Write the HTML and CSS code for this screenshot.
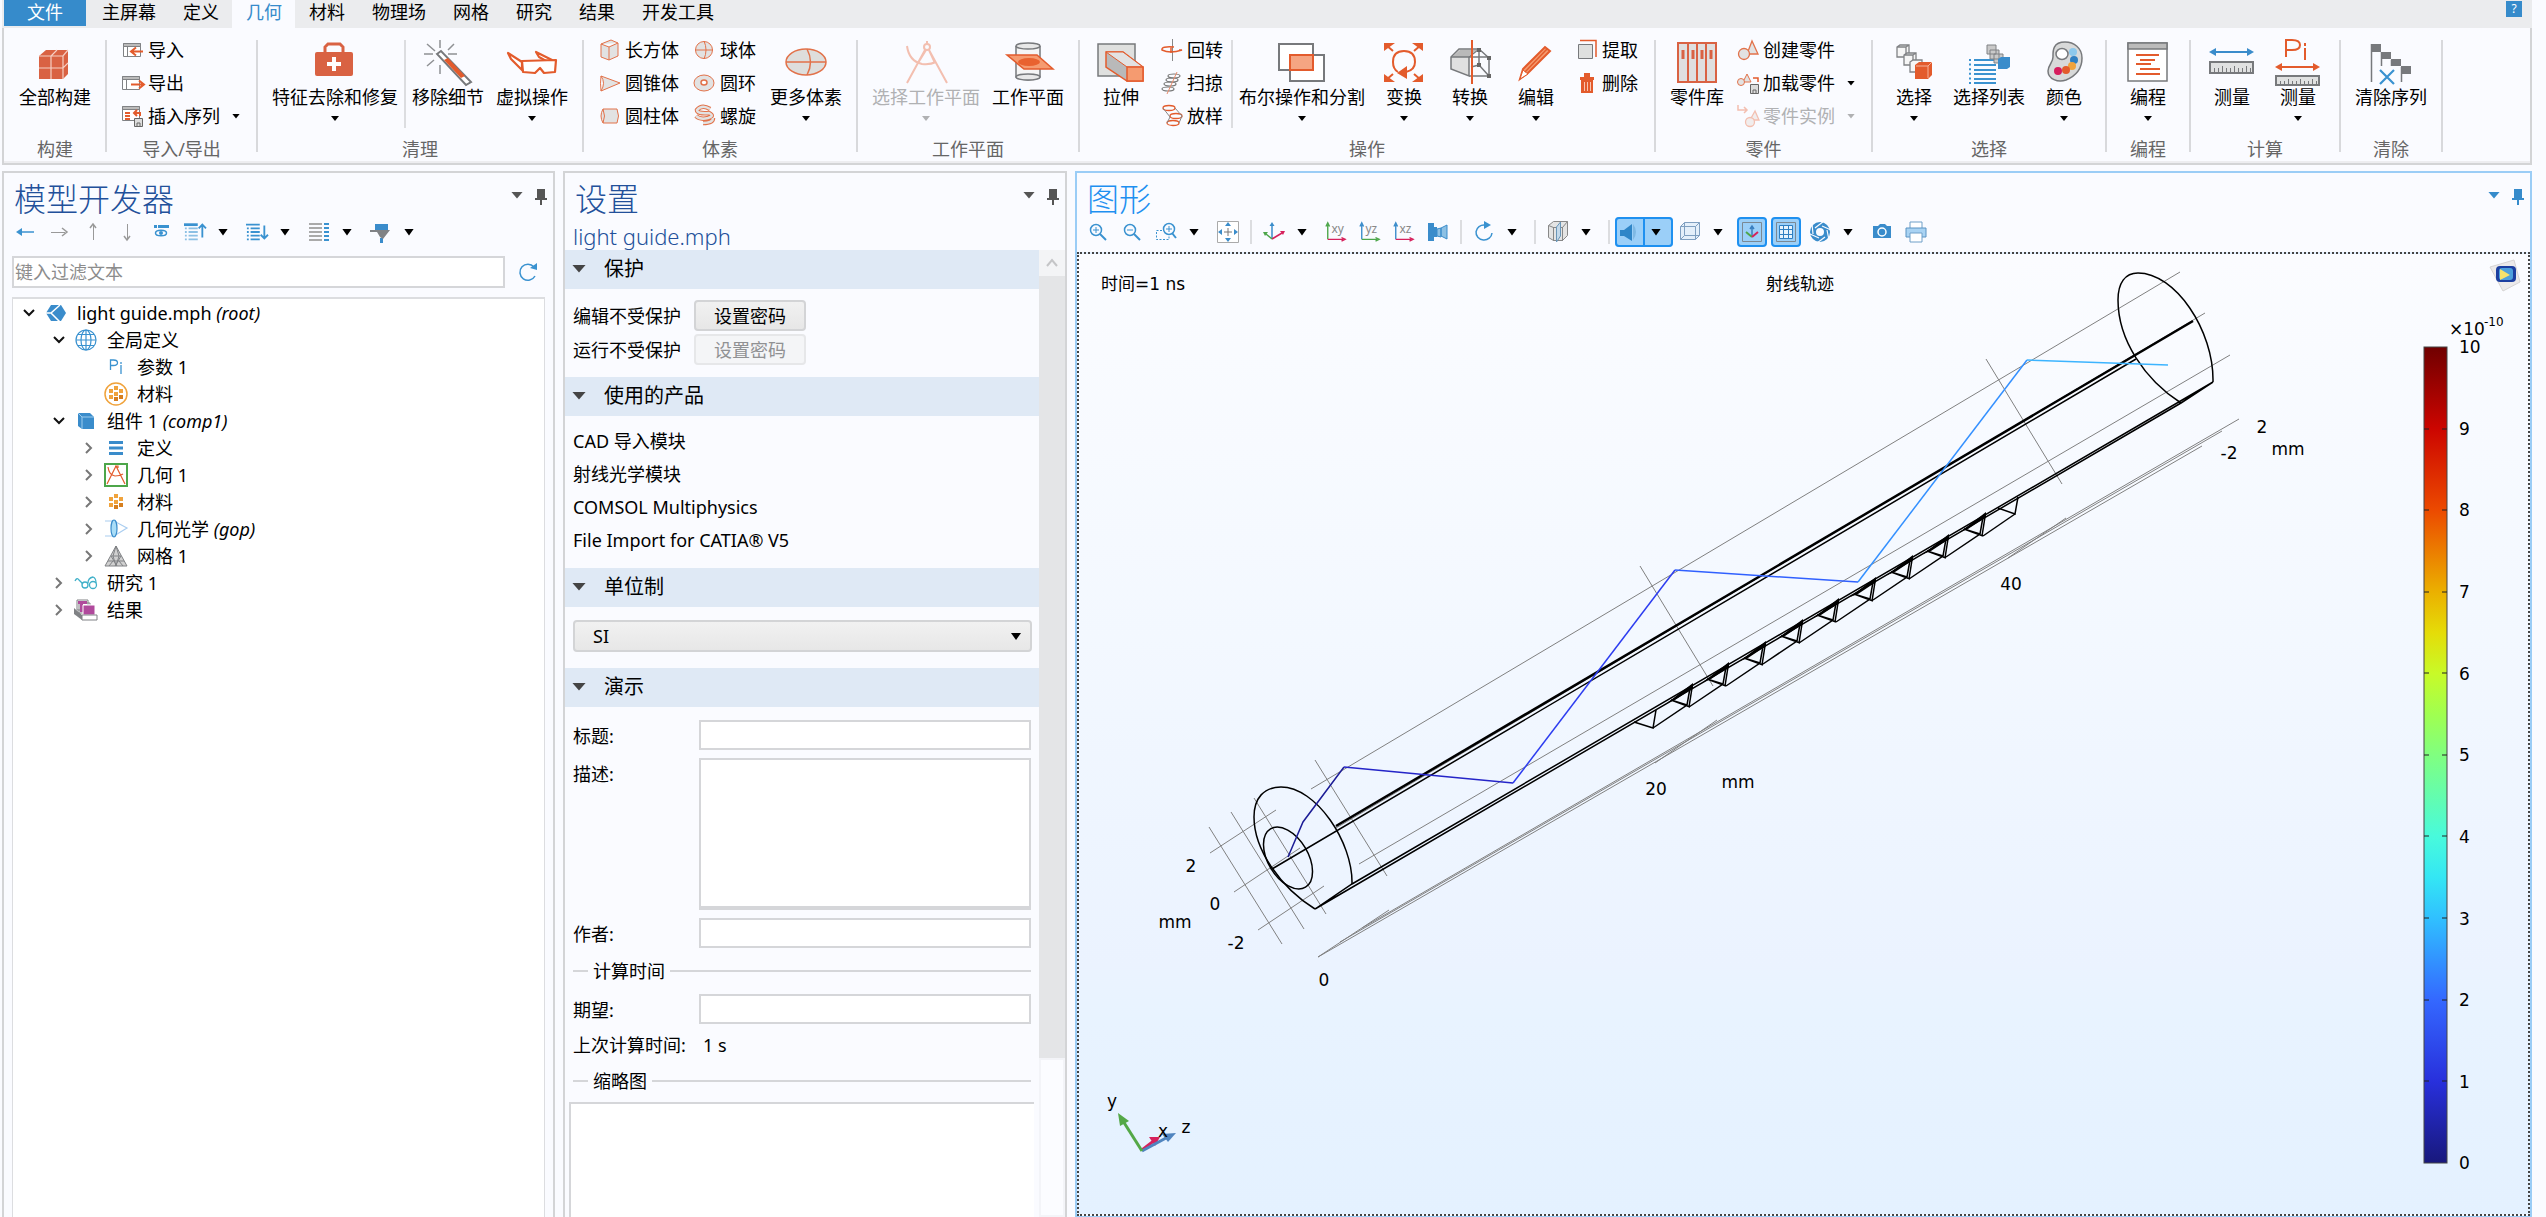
FILE: index.html
```html
<!DOCTYPE html>
<html lang="zh-CN">
<head>
<meta charset="utf-8">
<title>light guide.mph</title>
<link rel="stylesheet" href="styles.css">
</head>
<body>
<header class="top">
  <nav class="tabs">
    <button class="tab tab-file">文件</button>
    <button class="tab">主屏幕</button>
    <button class="tab">定义</button>
    <button class="tab tab-active">几何</button>
    <button class="tab">材料</button>
    <button class="tab">物理场</button>
    <button class="tab">网格</button>
    <button class="tab">研究</button>
    <button class="tab">结果</button>
    <button class="tab">开发工具</button>
    <button class="help">?</button>
  </nav>
  <div class="ribbon">
    <section class="group">
      <div class="tools">
        <button class="big"><svg class="ic-l" viewBox="0 0 48 44"><path fill="#d96243" d="M8 16l7-6h22v24l-5 5H8z"/><path stroke="#f6cfc4" stroke-width="1.2" fill="none" d="M8 16h24l5-6M32 16v23M20 39V16l6-6M8 28h24l5-5"/></svg><span>全部构建</span></button>
      </div>
      <h2>构建</h2>
    </section>
    <section class="group">
      <div class="tools">
        <div class="col">
          <button class="small"><svg class="ic-s" viewBox="0 0 24 22"><path fill="#fff" stroke="#808285" d="M2.500 4.500h17v13h-17z"/><path fill="#bbb" stroke="#808285" d="M2.500 4.500h17v3h-17zM6.500 8v10"/><path fill="none" stroke="#e35b2c" stroke-width="2" d="M22 12.500H10m5-4l-5 4 5 4"/></svg>导入</button>
          <button class="small"><svg class="ic-s" viewBox="0 0 24 22"><path fill="#fff" stroke="#808285" d="M1.500 4.500h17v13h-17z"/><path fill="#bbb" stroke="#808285" d="M1.500 4.500h17v3h-17zM5.500 8v10"/><path fill="none" stroke="#e35b2c" stroke-width="2" d="M10 12.500h13m-5-4l5 4-5 4"/></svg>导出</button>
          <button class="small"><svg class="ic-s" viewBox="0 0 24 22"><path fill="#fff" stroke="#808285" d="M1.500 1.500h17v14h-17z"/><path fill="#bbb" stroke="#808285" d="M1.500 1.500h17v3h-17z"/><path fill="none" stroke="#e35b2c" stroke-width="2" d="M4 8h5M4 11h5M4 14h5M19 11V8h-6m3-3l-3 3 3 3"/><path fill="#ddd" stroke="#666" d="M13.500 13.500h8v8h-8zM16 22v-4h3v4"/></svg>插入序列<i class="caret"></i></button>
        </div>
      </div>
      <h2>导入/导出</h2>
    </section>
    <section class="group">
      <div class="tools">
        <button class="big"><svg class="ic-l" viewBox="0 0 48 44"><rect x="4" y="12" width="38" height="24" rx="2" fill="#d96243"/><path fill="none" stroke="#d96243" stroke-width="3" d="M14 12V7l3-3h12l3 3v5"/><path stroke="#fff" stroke-width="4" d="M23 17v14M16 24h14"/></svg><span>特征去除和修复</span><i class="caret"></i></button>
        <i class="rule"></i>
        <button class="big"><svg class="ic-l" viewBox="0 0 48 44"><path stroke="#8f9194" stroke-width="1.500" d="M16 0v8M3 4l8 7M0 14h9M3 26l7-6M16 25v9M24 10l6-6M24 14h9"/><path fill="#fff" stroke="#77797c" stroke-width="2" d="M13 14l4-3 30 31-5 3z"/><path fill="#e35b2c" d="M20 20l4-2 17 18-4 2z"/></svg><span>移除细节</span></button>
        <button class="big"><svg class="ic-l" viewBox="0 0 48 44"><g fill="#fff" stroke="#e35b2c" stroke-width="2.200" stroke-linejoin="round"><path d="M14 22L0 13l3 6 11 11z"/><path d="M44 20L28 12l3 5 9 5z"/><path d="M14 21l34-1-1 12-11 1-4-5-5 5-12-1z"/></g></svg><span>虚拟操作</span><i class="caret"></i></button>
      </div>
      <h2>清理</h2>
    </section>
    <section class="group">
      <div class="tools">
        <div class="col">
          <button class="small"><svg class="ic-s" viewBox="0 0 24 22"><path fill="#e2e2e2" stroke="#e2724a" d="M3 5l10-4 7 3v13l-9 4-8-3zM3 5l8 3 9-4M11 8v13"/></svg>长方体</button>
          <button class="small"><svg class="ic-s" viewBox="0 0 24 22"><path fill="#e2e2e2" stroke="#e2724a" d="M3 4q5 7 0 15L22 11z"/><path fill="none" stroke="#e2724a" d="M3 4q-1 7 0 15"/></svg>圆锥体</button>
          <button class="small"><svg class="ic-s" viewBox="0 0 24 22"><path fill="#e2e2e2" stroke="#e2724a" d="M5 4h14q3 7 0 14H5q-4-7 0-14"/><path fill="none" stroke="#e2724a" d="M5 4q3 7 0 14"/></svg>圆柱体</button>
        </div>
        <div class="col">
          <button class="small"><svg class="ic-s" viewBox="0 0 24 22"><circle cx="11" cy="11" r="8.500" fill="#e2e2e2" stroke="#e2724a"/><path fill="none" stroke="#e2724a" d="M2 11h18M11 2q4 9 0 18"/></svg>球体</button>
          <button class="small"><svg class="ic-s" viewBox="0 0 24 22"><ellipse cx="11" cy="11" rx="10" ry="8" fill="#e2e2e2" stroke="#e2724a"/><ellipse cx="11" cy="10.500" rx="3" ry="2.500" fill="#fff" stroke="#e2724a" stroke-width="1.500"/></svg>圆环</button>
          <button class="small"><svg class="ic-s" viewBox="0 0 24 22"><path fill="none" stroke="#e2724a" stroke-width="4.500" d="M17 4Q9-1 4 5q0 4 12 3 6 3-1 5-8 2-12-2M20 13q0 5-10 5"/><path fill="none" stroke="#e2e2e2" stroke-width="2.500" d="M17 4Q9-1 4 5q0 4 12 3 6 3-1 5-8 2-12-2M20 13q0 5-10 5"/></svg>螺旋</button>
        </div>
        <button class="big"><svg class="ic-l" viewBox="0 0 48 44"><ellipse cx="24" cy="22" rx="20" ry="13" fill="#dededc" stroke="#e2724a" stroke-width="1.500"/><path fill="none" stroke="#e2724a" stroke-width="1.500" d="M4 22h40M25 9q7 13 0 26"/></svg><span>更多体素</span><i class="caret"></i></button>
      </div>
      <h2>体素</h2>
    </section>
    <section class="group">
      <div class="tools">
        <button class="big" disabled><svg class="ic-l" viewBox="0 0 48 44"><g fill="none" stroke="#f3bfb0" stroke-width="2"><circle cx="25" cy="7" r="3"/><path d="M25 1v3M23 10L5 43M27 10l18 33M5 6q2 15 15 18 8 1 14-2M24 10l-8 13M27 10l6 13"/></g></svg><span>选择工作平面</span><i class="caret"></i></button>
        <button class="big"><svg class="ic-l" viewBox="0 0 48 44"><path fill="#f5f5f5" stroke="#77797c" stroke-width="1.500" d="M12 6v31q12 6 24 0V6"/><ellipse cx="24" cy="6" rx="12" ry="3" fill="#e8e8e8" stroke="#77797c" stroke-width="1.500"/><ellipse cx="24" cy="37" rx="12" ry="3" fill="#e8e8e8" stroke="#77797c" stroke-width="1.500"/><path fill="#f59b70" stroke="#e35b2c" stroke-width="1.500" d="M3 15h30l16 14H20z"/><ellipse cx="25" cy="22" rx="11" ry="4" fill="#e9622f"/></svg><span>工作平面</span></button>
      </div>
      <h2>工作平面</h2>
    </section>
    <section class="group">
      <div class="tools">
        <button class="big"><svg class="ic-l" viewBox="0 0 48 44"><path fill="#dfe0df" stroke="#77797c" stroke-width="1.500" d="M1 4h37v32H1z"/><path fill="#b9b9b9" stroke="#e35b2c" stroke-width="1.500" d="M9 12h17l20 15v14H30L9 27z"/><path fill="#e2e2e2" stroke="#e35b2c" d="M9 12h17l20 15H30z"/><path fill="#f59b70" stroke="#e35b2c" stroke-width="1.500" d="M30 27h16v14H30z"/></svg><span>拉伸</span></button>
        <div class="col">
          <button class="small"><svg class="ic-s" viewBox="0 0 24 22"><path stroke="#888" d="M12.500 0v22"/><path fill="none" stroke="#e35b2c" stroke-width="1.500" d="M14 8Q1 7 2 11q8 4 20 0h-3m-8-3v6"/></svg>回转</button>
          <button class="small"><svg class="ic-s" viewBox="0 0 24 22"><g fill="none" stroke="#777" stroke-width="1.200"><ellipse cx="14" cy="4" rx="6" ry="2"/><ellipse cx="12" cy="8" rx="6" ry="2"/><ellipse cx="10" cy="12" rx="6" ry="2"/><ellipse cx="8" cy="17" rx="6" ry="2"/></g><path fill="none" stroke="#e98a6a" d="M17 0L7 22"/></svg>扫掠</button>
          <button class="small"><svg class="ic-s" viewBox="0 0 24 22"><g fill="none" stroke="#e35b2c" stroke-width="1.300"><ellipse cx="9" cy="3" rx="6" ry="2.500"/><ellipse cx="16" cy="11" rx="6" ry="2.500"/><ellipse cx="13" cy="18" rx="6" ry="2.500"/></g><path fill="none" stroke="#888" d="M3 3l7 9-3 6M15 3l7 8-3 7"/></svg>放样</button>
        </div>
        <i class="rule"></i>
        <button class="big"><svg class="ic-l" viewBox="0 0 48 44"><g fill="#fff" stroke="#77797c" stroke-width="2"><path d="M1 4h34v26H1zM12 15h34v26H12z"/></g><path fill="none" stroke="#77797c" stroke-width="2" d="M12 30V15h23"/><path fill="#f5a582" stroke="#e35b2c" stroke-width="2" d="M12 15h23v15H12z"/></svg><span>布尔操作和分割</span><i class="caret"></i></button>
        <button class="big"><svg class="ic-l" viewBox="0 0 48 44"><path fill="#e35b2c" d="M4 3h11l-11 8zM43 3H32l11 8zM4 42h11L4 34zM43 42H32l11-8zM17 33l10-7v13z"/><path fill="none" stroke="#e35b2c" stroke-width="2" d="M6 5l7 6M41 5l-7 6M6 40l7-6M41 40l-7-6M26 32q9-2 9-10 0-11-11-11T13 22q0 7 5 10"/></svg><span>变换</span><i class="caret"></i></button>
        <button class="big"><svg class="ic-l" viewBox="0 0 48 44"><path fill="#e0e0e0" stroke="#77797c" stroke-width="1.500" d="M5 17l8-8h20l-10 8v19L5 29z"/><path fill="#b9b9b9" d="M6 17l8-7h17l-9 7z"/><path fill="none" stroke="#77797c" stroke-width="1.500" d="M5 17h38M33 9v16l10 11V18L33 9M23 36h20M33 25l-8 2"/><path fill="#666" d="M31 8h4v4h-4zM41 16h4v4h-4zM41 34h4v4h-4zM31 23h4v4h-4z"/><path stroke="#e35b2c" stroke-width="2" d="M26 0v44"/></svg><span>转换</span><i class="caret"></i></button>
        <button class="big"><svg class="ic-l" viewBox="0 0 48 44"><path fill="#f59b70" stroke="#e35b2c" stroke-width="2" d="M8 39l3-10L33 7l5 4-22 22z"/><path fill="#fff" stroke="#e35b2c" d="M8 39l3-9 5 4z"/><path stroke="#e35b2c" stroke-width="1.500" d="M13 32l22-23"/></svg><span>编辑</span><i class="caret"></i></button>
        <div class="col">
          <button class="small"><svg class="ic-s" viewBox="0 0 24 22"><path fill="#dfe0df" stroke="#77797c" d="M3.500 5.500h14v14h-14z"/><path fill="none" stroke="#e35b2c" stroke-width="1.500" d="M5 1.500h16V18"/></svg>提取</button>
          <button class="small"><svg class="ic-s" viewBox="0 0 24 22"><path fill="#e35b2c" d="M5 5h14v3H5zM9 1h6v4H9zM6 8h12v13H6z"/><path stroke="#f8c4b0" d="M9.500 10v9M12.500 10v9M15.500 10v9"/></svg>删除</button>
        </div>
      </div>
      <h2>操作</h2>
    </section>
    <section class="group">
      <div class="tools">
        <button class="big"><svg class="ic-l" viewBox="0 0 48 44"><path fill="#dfdfdf" stroke="#d96243" stroke-width="2" d="M5 3h38v39H5zM15 3v39M24 3v39M33 3v39"/><path stroke="#d96243" stroke-width="3" d="M10 10v9M20 10v9M29 10v9M38 10v9"/></svg><span>零件库</span></button>
        <div class="col">
          <button class="small"><svg class="ic-s" viewBox="0 0 24 22"><g fill="#e2e2e2" stroke="#e2724a" stroke-width="1.300"><path d="M16 2l-5 13h11z"/><circle cx="8" cy="15" r="5.500"/></g></svg>创建零件</button>
          <button class="small"><svg class="ic-s" viewBox="0 0 24 22"><g fill="#e2e2e2" stroke="#e2724a"><path d="M11 2l-4 8h8z"/><circle cx="5" cy="10" r="3.500"/></g><path fill="none" stroke="#e35b2c" stroke-width="1.500" d="M22 10V6h-5"/><path fill="#ddd" stroke="#666" d="M14.500 12.500h8v9h-8zM17 22v-4h3v4"/></svg>加载零件<i class="caret"></i></button>
          <button class="small" disabled><svg class="ic-s" viewBox="0 0 24 22"><g fill="#f1eded" stroke="#f3bfb0" stroke-width="1.300"><path d="M19 6l-5 9h9z"/><circle cx="14" cy="17" r="4.500"/></g><path fill="none" stroke="#f3bfb0" stroke-width="1.500" d="M2 0v5h9m-3-3l3 3-3 3"/></svg>零件实例<i class="caret"></i></button>
        </div>
      </div>
      <h2>零件</h2>
    </section>
    <section class="group">
      <div class="tools">
        <button class="big"><svg class="ic-l" viewBox="0 0 48 44"><g fill="#f6f6f6" stroke="#808285" stroke-width="1.300"><path d="M7 7l3-2h9v9l-3 3H7zM7 7h9v10M16 7l3-2"/><path d="M14 15l3-2h9v9l-3 3h-9zM14 15h9v10M23 15l3-2"/><path d="M20 22l3-2h9v9l-3 3h-9z"/></g><path fill="#e35b2c" d="M25 25l4-3h13v13l-4 4H25z"/><path fill="none" stroke="#f5b39a" d="M26 26h12v12M38 26l4-4"/></svg><span>选择</span><i class="caret"></i></button>
        <button class="big"><svg class="ic-l" viewBox="0 0 48 44"><path fill="none" stroke="#3a92d0" stroke-width="2" d="M9 20h22M9 25h22M9 30h22M9 34h22M9 39h22M9 43h22" /><path stroke="#3a92d0" stroke-width="2" stroke-dasharray="2 2.600" d="M5 19v25"/><g fill="#c9c9c9" stroke="#808285"><path d="M22 5h9v9h-9zM25 10h9v9h-9zM29 14h9v9h-9z"/></g><path fill="#3a8ccb" d="M33 19l3-2h9v10l-3 2h-9z"/></svg><span>选择列表</span></button>
        <button class="big"><svg class="ic-l" viewBox="0 0 48 44"><path fill="#d8d9d9" stroke="#77797c" stroke-width="1.500" d="M25 2C12 2 13 12 13 17c0 6-5 8-5 14 0 8 10 12 18 9 12-5 16-14 16-22C42 8 34 2 25 2z"/><ellipse cx="22" cy="14" rx="6" ry="5.500" fill="#fff" stroke="#77797c" stroke-width="1.500"/><circle cx="33" cy="12" r="4" fill="#8cc8ec"/><circle cx="34" cy="20" r="4" fill="#2f7fc1"/><circle cx="32" cy="26" r="4" fill="#f0a33c"/><circle cx="26" cy="30" r="4" fill="#e35b2c"/><circle cx="18" cy="31" r="4" fill="#d61c5c"/></svg><span>颜色</span><i class="caret"></i></button>
      </div>
      <h2>选择</h2>
    </section>
    <section class="group">
      <div class="tools">
        <button class="big"><svg class="ic-l" viewBox="0 0 48 44"><path fill="#fff" stroke="#77797c" stroke-width="1.500" d="M4 3h39v38H4z"/><path fill="#bbb" stroke="#77797c" stroke-width="1.500" d="M4 3h39v6H4z"/><path stroke="#e35b2c" stroke-width="2" d="M12 15h23M16 20h15M12 24h15M16 29h20M12 34h24"/></svg><span>编程</span><i class="caret"></i></button>
      </div>
      <h2>编程</h2>
    </section>
    <section class="group">
      <div class="tools">
        <button class="big"><svg class="ic-l" viewBox="0 0 48 44"><path fill="#3a8ccb" d="M1 12l7-4v8zM46 12l-7-4v8z"/><path stroke="#3a8ccb" stroke-width="2" d="M5 12h37"/><path fill="#e0e1e1" stroke="#77797c" stroke-width="2" d="M2 22h43v11H2z"/><path stroke="#77797c" d="M6.500 32v-4M10.500 32v-4M14.500 32v-6M18.500 32v-4M22.500 32v-4M26.500 32v-6M30.500 32v-4M34.500 32v-4M38.500 32v-6M42.500 32v-4"/></svg><span>测量</span></button>
        <button class="big"><svg class="ic-l" viewBox="0 0 48 44"><path fill="none" stroke="#e35b2c" stroke-width="2" d="M12 17V0h6q8 0 8 5t-8 5h-6M31 8v12M31 3v3"/><path fill="#e35b2c" d="M1 27l7-4v8zM46 27l-7-4v8z"/><path stroke="#e35b2c" stroke-width="2" d="M5 27h37"/><path fill="#e0e1e1" stroke="#77797c" stroke-width="2" d="M2 36h43v9H2z"/><path stroke="#77797c" d="M6.500 44v-3M10.500 44v-3M14.500 44v-5M18.500 44v-3M22.500 44v-3M26.500 44v-5M30.500 44v-3M34.500 44v-3M38.500 44v-5M42.500 44v-3"/></svg><span>测量</span><i class="caret"></i></button>
      </div>
      <h2>计算</h2>
    </section>
    <section class="group">
      <div class="tools">
        <button class="big"><svg class="ic-l" viewBox="0 0 48 44"><path fill="#77797c" d="M4 4h10v8H4zM14 12h10v7H14zM24 19h10v7H24zM34 26h10v8H34z"/><path stroke="#77797c" stroke-width="1.500" d="M4.500 4v38M14.500 12v14M24.500 20v6M34.500 27v15"/><path stroke="#3a92d0" stroke-width="2.200" d="M13 30l14 14M27 30L13 44"/></svg><span>清除序列</span></button>
      </div>
      <h2>清除</h2>
    </section>
  </div>
</header>

<main class="work">
  <section class="panel">
    <div class="panel-head"><h1>模型开发器</h1><i class="caret caret-tool"></i><svg class="pin" viewBox="0 0 12 16"><path d="M2 0h8v9h2v2H7v5H5v-5H0V9h2z"/></svg></div>
    <div class="toolbar">
      <button class="tool" aria-label="后退"><svg viewBox="0 0 22 22"><path stroke="#3a92d0" stroke-width="1.500" d="M5 11h15"/><path fill="#3a92d0" d="M2 11l6-4v8z"/></svg></button>
      <button class="tool" aria-label="前进"><svg viewBox="0 0 22 22"><path stroke="#999" d="M3 11.500h14"/><path fill="none" stroke="#999" stroke-width="1.500" d="M14 7l5 4-5 4"/></svg></button>
      <button class="tool" aria-label="上移"><svg viewBox="0 0 22 22"><path stroke="#999" d="M11.500 4v15"/><path fill="none" stroke="#999" stroke-width="1.500" d="M8 7l3-4 3 4"/></svg></button>
      <button class="tool" aria-label="下移"><svg viewBox="0 0 22 22"><path stroke="#999" d="M11.500 3v15"/><path fill="none" stroke="#999" stroke-width="1.500" d="M8 15l3 4 3-4"/></svg></button>
      <button class="tool" aria-label="显示"><svg viewBox="0 0 22 22"><path stroke="#3a92d0" stroke-width="3" d="M4 5.500h3M8 5.500h11"/><ellipse cx="11" cy="12" rx="5.500" ry="2.800" fill="none" stroke="#3a92d0" stroke-width="1.500"/><circle cx="11" cy="12" r="2" fill="#3a92d0"/></svg></button>
      <button class="tool" aria-label="展开"><svg viewBox="0 0 24 22"><path stroke="#3a92d0" stroke-width="3" d="M0 3h15"/><path stroke="#8cc0e4" stroke-width="2" d="M1 7h2M5 7h10M1 11h2M5 11h10M1 15h2M5 15h10M1 19h2M5 19h10"/><path fill="none" stroke="#3a92d0" stroke-width="2" d="M20 17V3m-4 4l4-4 4 4"/></svg></button><button class="tool-drop" aria-label="展开选项"><i class="caret caret-tool"></i></button>
      <button class="tool" aria-label="折叠"><svg viewBox="0 0 24 22"><path stroke="#3a92d0" stroke-width="2" d="M0 3h15M1 7h2M5 7h10M1 11h2M5 11h10M1 15h2M5 15h10M1 19h2M5 19h10"/><path fill="none" stroke="#3a92d0" stroke-width="2" d="M20 4v14m-4-4l4 4 4-4"/></svg></button><button class="tool-drop" aria-label="折叠选项"><i class="caret caret-tool"></i></button>
      <button class="tool" aria-label="列"><svg viewBox="0 0 22 22"><path stroke="#aaa" stroke-width="2" d="M1 3h13M1 7h13M1 11h13M1 15h13M1 19h13"/><path stroke="#3a92d0" stroke-width="2" d="M16 3h5M16 7h5M16 11h5M16 15h5M16 19h5"/></svg></button><button class="tool-drop" aria-label="列选项"><i class="caret caret-tool"></i></button>
      <button class="tool" aria-label="筛选"><svg viewBox="0 0 22 22"><path fill="#3a8ccb" d="M5 3h13v6H5zM10 17h3v5h-3z"/><path fill="#808285" d="M0 9h20l-7 9-3-2-3-5H0z"/></svg></button><button class="tool-drop" aria-label="筛选选项"><i class="caret caret-tool"></i></button>
    </div>
    <div class="filter">
      <input class="field filter-box" type="text" placeholder="键入过滤文本" aria-label="键入过滤文本">
      <button class="tool" aria-label="刷新"><svg viewBox="0 0 22 22"><path fill="none" stroke="#3a92d0" stroke-width="1.500" d="M18 15a8 8 0 1 1-1-9"/><path fill="#3a92d0" d="M13 7l7-5v7z"/></svg></button>
    </div>
    <ul class="tree">
      <li class="node l0"><svg class="chev open" viewBox="0 0 12 12"><path d="M1 3l5 5 5-5"/></svg><svg class="ic-t" viewBox="0 0 24 24"><path fill="#3a8ccb" d="M2 12l5-8h10l5 8-5 8H7z"/><path stroke="#fff" stroke-width="1.500" fill="none" d="M2 12h5l9-8M7 12l9 9"/></svg><span>light guide.mph <em>(root)</em></span></li>
      <li class="node l1"><svg class="chev open" viewBox="0 0 12 12"><path d="M1 3l5 5 5-5"/></svg><svg class="ic-t" viewBox="0 0 24 24"><g fill="none" stroke="#3a92d0" stroke-width="1.200"><circle cx="12" cy="12" r="10"/><ellipse cx="12" cy="12" rx="5" ry="10"/><path d="M2 12h20M12 2v20M4 6.500h16M4 17.500h16"/></g></svg><span>全局定义</span></li>
      <li class="node l2"><i class="chev"></i><svg class="ic-t" viewBox="0 0 24 24"><path fill="none" stroke="#3a92d0" stroke-width="1.300" d="M6.500 15V5h3q4 0 4 2.700T9.500 10.500h-3M17 10v9M17 7v2"/></svg><span>参数 1</span></li>
      <li class="node l2"><i class="chev"></i><svg class="ic-t" viewBox="0 0 24 24"><circle cx="12" cy="12" r="11" fill="none" stroke="#f0a33c" stroke-width="1.500"/><path fill="#f0a33c" d="M10 4h4v4h-4zM5 7h4v4H5zM15 7h4v4h-4zM10 10h4v4h-4zM5 13h4v4H5z"/><path fill="#d67f1f" d="M15 13h4v4h-4zM10 15h4v4h-4z"/></svg><span>材料</span></li>
      <li class="node l1"><svg class="chev open" viewBox="0 0 12 12"><path d="M1 3l5 5 5-5"/></svg><svg class="ic-t" viewBox="0 0 24 24"><path fill="#3a8ccb" d="M4 4h12l4 4v12H8l-4-3z"/><path fill="none" stroke="#9cccee" d="M4 4l4 4h12M8 8v12"/></svg><span>组件 1 <em>(comp1)</em></span></li>
      <li class="node l2"><svg class="chev" viewBox="0 0 12 12"><path d="M3 1l5 5-5 5"/></svg><svg class="ic-t" viewBox="0 0 24 24"><path stroke="#3a8ccb" stroke-width="3" d="M5 6.500h14M5 12h14M5 17.500h14"/></svg><span>定义</span></li>
      <li class="node l2"><svg class="chev" viewBox="0 0 12 12"><path d="M3 1l5 5-5 5"/></svg><svg class="ic-t" viewBox="0 0 24 24"><path fill="#fff" stroke="#4da64a" stroke-width="2" d="M1 1h22v22H1z"/><path fill="none" stroke="#e35b2c" stroke-width="1.200" d="M12 3L3 21M12 3l9 18M4 4q1 8 7 9 5 0 8-2M11 3h3v2"/></svg><span>几何 1</span></li>
      <li class="node l2"><svg class="chev" viewBox="0 0 12 12"><path d="M3 1l5 5-5 5"/></svg><svg class="ic-t" viewBox="0 0 24 24"><path fill="#f0a33c" d="M10 4h4v4h-4zM5 7h4v4H5zM15 7h4v4h-4zM10 10h4v4h-4zM5 13h4v4H5z"/><path fill="#d67f1f" d="M15 13h4v4h-4zM10 15h4v4h-4z"/></svg><span>材料</span></li>
      <li class="node l2"><svg class="chev" viewBox="0 0 12 12"><path d="M3 1l5 5-5 5"/></svg><svg class="ic-t" viewBox="0 0 24 24"><path fill="none" stroke="#a9cdf0" stroke-width="1.200" d="M1 4h9l13 7-13 8H1"/><ellipse cx="10" cy="11.500" rx="3" ry="8.500" fill="#a9ddf7" stroke="#3a8ccb" stroke-width="1.200"/></svg><span>几何光学 <em>(gop)</em></span></li>
      <li class="node l2"><svg class="chev" viewBox="0 0 12 12"><path d="M3 1l5 5-5 5"/></svg><svg class="ic-t" viewBox="0 0 24 24"><path fill="#d0d0d0" stroke="#808285" d="M12 2l11 20H1z"/><path fill="none" stroke="#808285" d="M7 12h10M4 17h16M12 2L9 12l3 10 3-10zM7 12l6 10M17 12l-6 10M9 17l-4 5M15 17l4 5"/></svg><span>网格 1</span></li>
      <li class="node l1"><svg class="chev" viewBox="0 0 12 12"><path d="M3 1l5 5-5 5"/></svg><svg class="ic-t" viewBox="0 0 24 24"><g fill="none" stroke="#3fb0c9" stroke-width="1.300"><circle cx="11" cy="14" r="3"/><circle cx="19" cy="14" r="3.500"/><path d="M1 10q2-4 4-1l4 4M14 12q0-5 5-6 3 1 3 6"/></g></svg><span>研究 1</span></li>
      <li class="node l1"><svg class="chev" viewBox="0 0 12 12"><path d="M3 1l5 5-5 5"/></svg><svg class="ic-t" viewBox="0 0 24 24"><path fill="#fff" stroke="#808285" d="M3 2h11v10H3zM5 5h11v10H5z"/><path fill="#b04a9c" d="M4 3h9v3H4zM6 6h3v8H6z"/><path fill="#b04a9c" stroke="#fff" d="M9 7h12v10H9z"/><path fill="#808285" d="M0 10l8 7v5l-8-6z"/><path fill="#fff" stroke="#808285" d="M8 17h15v5H8z"/></svg><span>结果</span></li>
    </ul>
  </section>

  <section class="panel">
    <div class="panel-head"><h1>设置</h1><i class="caret caret-tool"></i><svg class="pin" viewBox="0 0 12 16"><path d="M2 0h8v9h2v2H7v5H5v-5H0V9h2z"/></svg></div>
    <div class="subtitle">light guide.mph</div>
    <div class="scroll">
      <form class="settings">
        <h3><i class="caret caret-sec"></i>保护</h3>
        <div class="protect">
          <label for="pw1">编辑不受保护</label><button type="button" id="pw1" class="push">设置密码</button>
          <label for="pw2">运行不受保护</label><button type="button" id="pw2" class="push" disabled>设置密码</button>
        </div>
        <h3><i class="caret caret-sec"></i>使用的产品</h3>
        <ul class="products"><li>CAD 导入模块</li><li>射线光学模块</li><li>COMSOL Multiphysics</li><li>File Import for CATIA® V5</li></ul>
        <h3><i class="caret caret-sec"></i>单位制</h3>
        <div class="units"><select class="unit" aria-label="单位制"><option>SI</option></select><i class="caret caret-tool unit-caret"></i></div>
        <h3><i class="caret caret-sec"></i>演示</h3>
        <div class="present">
          <div class="row"><label for="f1">标题:</label><input id="f1" class="field" type="text"></div>
          <div class="row"><label for="f2">描述:</label><textarea id="f2" class="field area"></textarea></div>
          <div class="row"><label for="f3">作者:</label><input id="f3" class="field" type="text"></div>
          <div class="divider">计算时间</div>
          <div class="row"><label for="f4">期望:</label><input id="f4" class="field" type="text"></div>
          <div class="row row-text"><span>上次计算时间:</span><span class="value">1 s</span></div>
          <div class="divider">缩略图</div>
        </div>
        <div class="thumb"></div>
      </form>
      <div class="bar"><div class="bar-up"><svg viewBox="0 0 12 12"><path d="M1 9l5-6 5 6"/></svg></div><div class="bar-thumb"></div><div class="bar-rest"></div></div>
    </div>
  </section>

  <section class="panel panel-active">
    <div class="panel-head"><h1>图形</h1><i class="caret caret-tool"></i><svg class="pin" viewBox="0 0 12 16"><path d="M2 0h8v9h2v2H7v5H5v-5H0V9h2z"/></svg></div>
    <div class="toolbar">
      <button class="tool" aria-label="放大"><svg viewBox="0 0 22 22"><circle cx="9" cy="9" r="5.500" fill="none" stroke="#3a92d0" stroke-width="1.500"/><path stroke="#3a92d0" stroke-width="2" d="M13 13l6 6"/><path stroke="#3a92d0" d="M6 9h6M9 6v6"/></svg></button>
      <button class="tool" aria-label="缩小"><svg viewBox="0 0 22 22"><circle cx="9" cy="9" r="5.500" fill="none" stroke="#3a92d0" stroke-width="1.500"/><path stroke="#3a92d0" stroke-width="2" d="M13 13l6 6"/><path stroke="#3a92d0" d="M6 9h6"/></svg></button>
      <button class="tool" aria-label="框选缩放"><svg viewBox="0 0 22 22"><circle cx="14" cy="8" r="5.500" fill="none" stroke="#3a92d0" stroke-width="1.500"/><path stroke="#3a92d0" stroke-width="2" d="M17 12l4 5"/><path stroke="#3a92d0" d="M11 8h6M14 5v6"/><path fill="none" stroke="#3a92d0" stroke-dasharray="2 1.500" d="M7 9.500H1.500v9H14V15"/></svg></button><button class="tool-drop" aria-label="缩放选项"><i class="caret caret-tool"></i></button>
      <button class="tool" aria-label="缩放到窗口"><svg viewBox="0 0 22 22"><path fill="#fff" stroke="#aaa" d="M.5.5h21v21H.5z"/><path stroke="#777" d="M7 11h8M11 7v8"/><path fill="#3a8ccb" d="M11 1l3 4H8zM11 21l3-4H8zM1 11l4-3v6zM21 11l-4-3v6z"/></svg></button>
      <i class="tool-sep"></i>
      <button class="tool" aria-label="视图"><svg viewBox="0 0 22 22"><path stroke="#3a8ccb" stroke-width="1.500" d="M9 18V4"/><path fill="#3a8ccb" d="M6.500 5L9 1l2.500 4z"/><path stroke="#d6215c" stroke-width="1.500" d="M9 18l10-6"/><path fill="#d6215c" d="M17 10h5l-2 4z"/><path stroke="#4da64a" stroke-width="1.500" d="M9 18l-6-5"/><path fill="#4da64a" d="M0 11h5l-3 4z"/></svg></button><button class="tool-drop" aria-label="视图选项"><i class="caret caret-tool"></i></button>
      <button class="tool" aria-label="xy 视图"><svg class="axes" viewBox="0 0 24 22"><path stroke="#4da64a" stroke-width="1.500" d="M3 19V3M1 5l2-4 2 4"/><path stroke="#d6215c" stroke-width="1.500" d="M3 19h17M18 17l4 2-4 2"/><text x="7" y="12">xy</text></svg></button>
      <button class="tool" aria-label="yz 视图"><svg class="axes" viewBox="0 0 24 22"><path stroke="#3a8ccb" stroke-width="1.500" d="M3 19V3M1 5l2-4 2 4"/><path stroke="#4da64a" stroke-width="1.500" d="M3 19h17M18 17l4 2-4 2"/><text x="7" y="12">yz</text></svg></button>
      <button class="tool" aria-label="xz 视图"><svg class="axes" viewBox="0 0 24 22"><path stroke="#3a8ccb" stroke-width="1.500" d="M3 19V3M1 5l2-4 2 4"/><path stroke="#d6215c" stroke-width="1.500" d="M3 19h17M18 17l4 2-4 2"/><text x="7" y="12">xz</text></svg></button>
      <button class="tool" aria-label="相机"><svg viewBox="0 0 22 22"><path fill="#3a8ccb" d="M1 2h6v4h3v10H7v4H1z"/><path fill="#8cc0e4" stroke="#3a8ccb" d="M10 8l4-1v9l-4-1zM14 7l6-3v14l-6-3z"/></svg></button>
      <i class="tool-sep"></i>
      <button class="tool" aria-label="旋转"><svg viewBox="0 0 22 22"><path fill="none" stroke="#3a92d0" stroke-width="1.500" d="M19 12a8 7.500 0 1 1-7-8"/><path fill="#3a92d0" d="M11 0l7 4-7 4z"/></svg></button><button class="tool-drop" aria-label="旋转选项"><i class="caret caret-tool"></i></button>
      <i class="tool-sep"></i>
      <button class="tool" aria-label="裁剪"><svg viewBox="0 0 22 22"><path fill="#e4e4e4" stroke="#888" d="M1.500 4.500l5-4h14v14l-5 5h-9l-5-3z"/><path fill="none" stroke="#888" d="M1.500 4.500l5 2h9l5-6M6.500 6v14M15.500 6v14"/><path fill="#c4d9ea" stroke="#6a96b8" d="M9.500 6l4-5v14l-4 6z"/></svg></button><button class="tool-drop" aria-label="裁剪选项"><i class="caret caret-tool"></i></button>
      <i class="tool-sep"></i>
      <span class="split"><button class="tool" aria-label="场景光"><svg viewBox="0 0 22 22"><path fill="#2f86c8" d="M2 9h4l8-6v17l-8-5H2z"/><path fill="#7fb9e4" d="M15 3q6 8 0 16z"/></svg></button><button class="tool-drop" aria-label="场景光选项"><i class="caret caret-tool"></i></button></span>
      <button class="tool" aria-label="透明度"><svg viewBox="0 0 22 22"><path fill="#e4effa" stroke="#7f9fc0" d="M1.500 5.500l4-4h15v13l-4 4h-15z"/><path fill="none" stroke="#7f9fc0" d="M1.500 5.500h15v13M16.500 5.500l4-4M5.500 1.500v13h15M5.500 14.500l-4 4"/></svg></button><button class="tool-drop" aria-label="透明度选项"><i class="caret caret-tool"></i></button>
      <button class="tool on" aria-label="显示坐标轴"><svg viewBox="0 0 22 22"><path fill="none" stroke="#7a8894" d="M1.500 1.500h19v19h-19z"/><path fill="none" stroke="#3a7fc0" stroke-width="1.500" d="M11 15V6M9 8l2-3 2 3"/><path stroke="#4da64a" stroke-width="2" d="M11 16l-6-5"/><path stroke="#d6215c" stroke-width="2" d="M11 16l6-5"/></svg></button>
      <button class="tool on" aria-label="显示栅格"><svg viewBox="0 0 22 22"><path fill="none" stroke="#7a8894" d="M1.500 1.500h19v19h-19z"/><path fill="#e6f3fd" d="M4.500 4.500h13v13h-13z"/><path fill="none" stroke="#2f7fc1" d="M4.500 4.500h13v13h-13zM8.500 5v12M13.500 5v12M5 8.500h12M5 13.500h12"/></svg></button>
      <button class="tool" aria-label="快照"><svg viewBox="0 0 22 22"><circle cx="11" cy="11" r="7" fill="none" stroke="#3a8ccb" stroke-width="6"/><path stroke="#fafbff" stroke-width="1.200" d="M15 0L6 7M22 9l-9-4M20 19l-2-10M8 22l8-6M1 13l9 4M3 3l1 10"/></svg></button><button class="tool-drop" aria-label="快照选项"><i class="caret caret-tool"></i></button>
      <button class="tool" aria-label="图像快照"><svg viewBox="0 0 22 22"><path fill="#3a8ccb" d="M2 5h5l2-2h5l2 2h4v12H2z"/><circle cx="11" cy="11" r="4" fill="none" stroke="#fff" stroke-width="1.500"/></svg></button>
      <button class="tool" aria-label="打印"><svg viewBox="0 0 22 22"><path fill="#fff" stroke="#6f9fc8" d="M5 1h12v7H5z"/><path fill="#a9d3f3" stroke="#5b93c2" d="M1 7h20v9H1z"/><path fill="#fff" stroke="#6f9fc8" d="M5 12h12v9H5z"/></svg></button>
    </div>
    <div class="canvas">
      <svg class="plot" viewBox="1079 254 1449 960">
        <defs>
          <linearGradient id="jet" x1="0" y1="0" x2="0" y2="1">
            <stop offset="0" stop-color="#700000"/><stop offset=".1" stop-color="#cc0500"/><stop offset=".2" stop-color="#ec4a00"/><stop offset=".3" stop-color="#ebb000"/><stop offset=".35" stop-color="#e5dc08"/><stop offset=".4" stop-color="#c8fa28"/><stop offset=".45" stop-color="#a0ff50"/><stop offset=".5" stop-color="#80ff80"/><stop offset=".6" stop-color="#48fadc"/><stop offset=".65" stop-color="#34e6f4"/><stop offset=".7" stop-color="#30c0ff"/><stop offset=".8" stop-color="#3468ff"/><stop offset=".9" stop-color="#2830dc"/><stop offset="1" stop-color="#18187c"/>
          </linearGradient>
          <g id="tooth"><path class="blk" d="M0 0L34 -23L37 -40M36 -21L39 -40M34 -23L18 -28L37 -21"/><path d="M14 -25L40 -45L40 -40L22 -28z"/></g>
        </defs>
        <g class="gry">
          <path d="M2180 272L1311 789M2205 313L1336 828M2230 355L1359 864"/>
          <path d="M2239 419L1362 928M2222 431L1340 942M2202 446L1318 957M1389 910L1318 957M1717 720L1655 763M2066 518L2008 558"/>
          <path d="M1986 359L2062 484M1640 566L1713 686M1315 760L1387 876M1254 798L1326 914M1231 812L1304 929M1209 827L1282 944M1210 853L1276 810M1234 892L1300 848M1258 930L1324 886"/>
        </g>
        <path class="blk" d="M1315 909C1281 888 1254 850 1254 817C1254 798 1264 787 1281 787C1316 787 1353 842 1352 884M2181 403C2145 380 2118 340 2118 300C2118 283 2125 273 2138 273C2175 273 2214 330 2213 382"/>
        <ellipse class="blk" cx="1288" cy="858" rx="34" ry="20" transform="rotate(59 1288 858)"/>
        <path class="blk thick" d="M1336 826L2193 321"/>
        <path class="blk" d="M1272 869L2136 359M1315 909L2181 403L2213 382L1352 884L1315 909"/>
        <path class="blk" d="M1634 722L1653 728L1656 710M2018 497L2015 514L1998 508"/>
        <use href="#tooth" x="1653" y="728"/><use href="#tooth" x="1689" y="707"/><use href="#tooth" x="1726" y="686"/><use href="#tooth" x="1763" y="664"/><use href="#tooth" x="1799" y="643"/><use href="#tooth" x="1836" y="622"/><use href="#tooth" x="1873" y="600"/><use href="#tooth" x="1909" y="579"/><use href="#tooth" x="1946" y="557"/>
        <path class="blk" d="M1983 536L2015 514"/>
        <g class="ray">
          <path stroke="#1c1c96" d="M1288 857L1303 822L1344 767"/><path stroke="#2424c8" d="M1344 767L1513 783"/><path stroke="#2c3cf0" d="M1513 783L1675 570"/><path stroke="#3060ff" d="M1675 570L1858 582"/><path stroke="#3390ff" d="M1858 582L2027 360"/><path stroke="#3cb4ff" d="M2027 360L2168 365"/>
        </g>
        <g class="lbl">
          <text x="1191" y="872">2</text><text x="1215" y="910">0</text><text x="1175" y="928">mm</text><text x="1236" y="949">-2</text><text x="1324" y="986">0</text><text x="1656" y="795">20</text><text x="1738" y="788">mm</text><text x="2011" y="590">40</text><text x="2262" y="433">2</text><text x="2229" y="459">-2</text><text x="2288" y="455">mm</text>
          <text x="1800" y="290">射线轨迹</text>
        </g>
        <g class="val">
          <text x="1101" y="290">时间=1 ns</text>
          <text x="2449" y="335">×10</text><text class="exp" x="2484" y="326">-10</text>
          <text x="2459" y="353">10</text><text x="2459" y="435">9</text><text x="2459" y="516">8</text><text x="2459" y="598">7</text><text x="2459" y="680">6</text><text x="2459" y="761">5</text><text x="2459" y="843">4</text><text x="2459" y="925">3</text><text x="2459" y="1006">2</text><text x="2459" y="1088">1</text><text x="2459" y="1169">0</text>
        </g>
        <rect x="2424" y="347" width="23" height="816" fill="url(#jet)" stroke="#444"/>
        <path stroke="#222" d="M2424 429h5m13 0h5M2424 510h5m13 0h5M2424 592h5m13 0h5M2424 673h5m13 0h5M2424 755h5m13 0h5M2424 836h5m13 0h5M2424 918h5m13 0h5M2424 1000h5m13 0h5M2424 1081h5m13 0h5"/>
        <path fill="#eceaea" stroke="#d6d4d4" d="M2490 267l24-7 6 22-17 9z"/>
        <rect x="2496" y="266" width="20" height="16" rx="4" fill="#1c3fa0"/><rect x="2499" y="268" width="14" height="12" rx="3" fill="#4ea0dc"/><path fill="#f6e26a" d="M2500 269l10 6-10 5z"/>
        <path stroke="#d6215c" stroke-width="3" d="M1142 1150L1155 1140"/><path fill="#d6215c" d="M1149 1137h11l-5 9z"/>
        <path stroke="#4f84bf" stroke-width="3" d="M1142 1151L1166 1138"/><path fill="#4f84bf" d="M1176 1133l-14 1 6 8z"/>
        <path stroke="#54a847" stroke-width="3" d="M1142 1151L1123 1121"/><path fill="#54a847" d="M1118 1113l2 13 9-5z"/>
        <g class="lbl"><text x="1112" y="1107">y</text><text x="1163" y="1137">x</text><text x="1186" y="1133">z</text></g>
      </svg>
    </div>
  </section>
</main>
</body>
</html>
```
FILE: styles.css
```css
* { box-sizing: border-box; }

body {
  margin: 0;
  height: 100vh;
  display: flex;
  flex-direction: column;
  gap: 6px;
  padding: 0 14px 0 2px;
  overflow: hidden;
  background: #fafbff;
  color: #000;
  font: 18px/24px "Noto Sans", "Noto Sans CJK SC", sans-serif;
}

h1, h2, h3, ul { margin: 0; padding: 0; font-weight: 400; list-style: none; }
button { margin: 0; padding: 0; border: 0; background: none; color: inherit; font: inherit; white-space: nowrap; }
svg { display: block; flex: none; overflow: visible; }

/* Tabs */
.tabs { display: flex; height: 28px; padding: 0 10px 0 2px; background: #ebecee; }
.tab { padding: 0 13px 4px 14px; }
.tab-file { width: 82px; height: 26px; margin-right: 2px; padding: 0 0 2px; background: #368bcb; color: #fff; }
.tab-active { background: #fafbff; color: #368bcb; }
.help { width: 16px; height: 16px; margin: 1px 0 0 auto; background: #368bcb; color: #fff; font-size: 12px; line-height: 16px; }

/* Ribbon */
.ribbon {
  display: flex;
  height: 137px;
  padding: 12px 0 0 1px;
  border: solid #d3d4d6;
  border-width: 0 2px 2px;
  box-shadow: inset 0 -2px #ededf0;
}
.group { display: flex; flex-direction: column; height: 112px; padding: 0 8px; border-right: 2px solid #d8d9dc; }
.tools { display: flex; flex: none; height: 97px; }
.group h2 { flex: none; color: #666; text-align: center; font-size: 18px; line-height: 24px; white-space: nowrap; }
.big { display: flex; flex-direction: column; align-items: center; min-width: 66px; padding: 0 6px; }
.ic-l { width: 48px; height: 44px; margin-bottom: 1px; }
.big .caret { margin-top: 7px; }
.rule { width: 2px; height: 88px; background: #dcdde0; }
.col { display: flex; flex-direction: column; gap: 13px; padding: 0 8px 0 6px; }
.small { display: flex; align-items: center; height: 20px; gap: 3px; }
.small .caret { margin-left: 9px; }
.ic-s { width: 24px; height: 22px; }
button:disabled { color: #b0b1b3; }

.caret { display: block; flex: none; width: 8px; height: 5px; background: currentColor; clip-path: polygon(0 0, 100% 0, 50% 100%); }
.caret-tool { width: 10px; height: 7px; }
.caret-sec { width: 14px; height: 8px; color: #444; }

/* Panels */
.work { flex: 1; min-height: 0; display: grid; grid-template-columns: minmax(0, 553fr) minmax(0, 504fr) minmax(0, 1457fr); gap: 8px; }
.panel { display: flex; flex-direction: column; min-height: 0; border: 2px solid #d3d4d6; border-bottom: 0; }
.panel-active { border: 2px solid #9bcdf6; border-bottom-width: 1px; }
.panel-head { display: flex; align-items: center; height: 48px; padding: 4px 6px 0 10px; color: #555; }
.panel-head h1 { margin-right: auto; font-size: 32px; line-height: 44px; font-weight: 300; color: #22509a; }
.panel-active .panel-head h1 { color: #1e90f0; }
.panel-active .panel-head { color: #368bcb; }
.panel-head .caret { width: 12px; height: 7px; margin-bottom: 8px; }
.pin { width: 12px; height: 16px; margin: 0 0 4px 12px; fill: currentColor; }

.toolbar { display: flex; align-items: center; height: 22px; padding-left: 4px; }
.tool { display: flex; align-items: center; justify-content: center; width: 34px; height: 30px; }
.tool svg { width: 22px; height: 22px; }
.tool-drop { display: flex; align-items: center; width: 28px; height: 30px; padding-left: 6px; }
.tool-sep { width: 2px; height: 24px; margin: 0 5px; background: #dcdde0; }
.axes { fill: none; }
.axes text { fill: #888; font-size: 13px; }
.split { display: flex; border-radius: 4px; background: #9bcff8; box-shadow: inset 0 0 0 2px #1e90f0; }
.split .tool { width: 30px; border-right: 2px solid #1e90f0; }
.on { width: 30px; margin: 0 2px; border: 2px solid #1e90f0; border-radius: 4px; background: #9bcff8; }

/* Model tree */
.filter { display: flex; align-items: center; gap: 6px; margin: 13px 8px 9px; }
.field { display: block; height: 30px; border: 2px solid #d5d6d9; border-radius: 0; background: #fff; font: inherit; }
.filter-box { flex: 1; min-width: 0; height: 32px; padding: 0 1px; }
.filter-box::placeholder { color: #8c8c8c; }
.tree { flex: 1; margin: 0 8px; border: solid #dcdde0; border-width: 2px 1px 0; background: #fff; }
.node { display: flex; align-items: center; height: 27px; white-space: nowrap; }
.l0 { padding-left: 10px; }
.l1 { padding-left: 40px; }
.l2 { padding-left: 70px; }
.chev { width: 12px; height: 12px; flex: none; margin-right: 9px; fill: none; stroke: #777; stroke-width: 2; }
.open { stroke: #111; }
.ic-t { width: 24px; height: 24px; margin-right: 9px; }

/* Settings */
.subtitle { height: 29px; padding-left: 8px; color: #22509a; font-size: 22px; line-height: 30px; font-weight: 300; }
.scroll { flex: 1; min-height: 0; display: flex; overflow: hidden; }
.settings { flex: 1; min-width: 0; }
.settings h3 { display: flex; align-items: center; gap: 18px; height: 39px; padding: 0 7px 2px; background: #dfe9f5; font-size: 20px; }
.protect { display: grid; grid-template-columns: 121px 112px; gap: 3px 0; align-items: center; padding: 11px 8px 12px; }
.push { height: 31px; border: 2px solid #d3d4d6; border-radius: 4px; background: linear-gradient(#f1f1f1, #e7e7e7); }
.push:disabled { border-color: #e6e7e9; background: #f4f5f7; color: #909193; }
.products { padding: 9px 8px 11px; line-height: 33px; }
.units { position: relative; padding: 13px 7px 16px 8px; }
.unit { width: 100%; height: 32px; padding: 0 18px; appearance: none; border: 2px solid #d3d4d6; border-radius: 4px; background: linear-gradient(#f1f1f1, #e7e7e7); color: #000; font: inherit; }
.unit-caret { position: absolute; right: 18px; top: 26px; }
.present { display: flex; flex-direction: column; gap: 8px; padding: 13px 8px 0; }
.row { display: grid; grid-template-columns: 126px minmax(0, 1fr); }
.row label { padding-top: 4px; }
.area { height: 152px; resize: none; border-bottom-width: 4px; }
.row-text { line-height: 26px; }
.value { padding-left: 4px; }
.divider { display: flex; align-items: center; gap: 5px; height: 30px; }
.divider::before, .divider::after { content: ""; width: 15px; height: 2px; background: #d5d6d9; }
.divider::after { flex: 1; }
.thumb { height: 300px; margin: 6px 5px 0 4px; border: solid #d5d6d9; border-width: 2px 0 0 2px; background: #fff; }
.bar { width: 26px; display: flex; flex-direction: column; }
.bar-up { display: flex; align-items: center; justify-content: center; height: 26px; background: #f3f4f6; }
.bar-up svg { width: 12px; height: 12px; fill: none; stroke: #c4c5c7; stroke-width: 2; }
.bar-thumb { flex: 785; background: #e4e5e7; }
.bar-rest { flex: 156; background: #fbfcff; border: 2px solid #f3f4f8; }

/* Plot */
.canvas { flex: 1; min-height: 0; margin-top: 9px; border: 2px dotted #444; background: linear-gradient(#fbfcff, #f3f8ff 40%, #eef5ff 60%, #ebf3ff 74%, #e8f3ff 80%, #e4f1ff); }
.plot { width: 100%; height: 100%; }
.gry { fill: none; stroke: #808080; stroke-width: 1; }
.blk { fill: none; stroke: #000; stroke-width: 1.5; }
.thick { stroke-width: 2.5; }
.ray { fill: none; stroke-width: 1.5; }
.lbl, .val { font-family: "DejaVu Sans", "Noto Sans CJK SC", sans-serif; font-size: 17px; }
.lbl { text-anchor: middle; }
.exp { font-size: 12px; }
```
